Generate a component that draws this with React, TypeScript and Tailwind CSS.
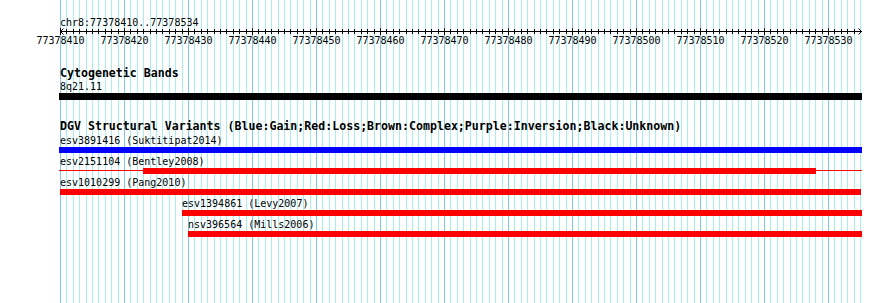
const ORIGIN = 60;
const BP_WIDTH = 6.4;
const START = 77378410;
const END = 77378534;

interface Feature {
  id: string;
  label: string;
  labelX: number;
  color: string;
  x1: number;
  x2: number;
  thin?: { x1: number; x2: number };
}

const variants: Feature[] = [
  { id: "esv3891416", label: "esv3891416 (Suktitipat2014)", labelX: 60, color: "#0000ff", x1: 59, x2: 862 },
  {
    id: "esv2151104",
    label: "esv2151104 (Bentley2008)",
    labelX: 60,
    color: "#ff0000",
    x1: 143,
    x2: 816,
    thin: { x1: 59, x2: 862 },
  },
  { id: "esv1010299", label: "esv1010299 (Pang2010)", labelX: 60, color: "#ff0000", x1: 60, x2: 861 },
  { id: "esv1394861", label: "esv1394861 (Levy2007)", labelX: 182, color: "#ff0000", x1: 182, x2: 862 },
  { id: "nsv396564", label: "nsv396564 (Mills2006)", labelX: 188, color: "#ff0000", x1: 188, x2: 862 },
];

function bpToX(bp: number): number {
  return Math.round(ORIGIN + (bp - START) * BP_WIDTH);
}

function Grid() {
  const lines = [];
  for (let i = 0; i <= END - START + 1; i++) {
    lines.push(
      <rect
        key={i}
        x={Math.round(ORIGIN + i * BP_WIDTH)}
        y={0}
        width={1}
        height={303}
        fill={i % 10 === 0 ? "#7fc7ec" : "#a9eded"}
      />
    );
  }
  return (
    <svg className="absolute inset-0" width={890} height={303}>
      {lines}
    </svg>
  );
}

function Ruler() {
  const ticks = [];
  const labels = [];
  for (let bp = START; bp <= END; bp++) {
    const x = bpToX(bp) + 0.5;
    const major = (bp - START) % 10 === 0;
    ticks.push(<line key={bp} x1={x} x2={x} y1={major ? 0 : 1} y2={major ? 7 : 6} stroke="#000" />);
    if (major) {
      labels.push(
        <text key={bp} x={x} y={16} textAnchor="middle" fontSize={10} fill="#000">
          {bp}
        </text>
      );
    }
  }
  return (
    <svg width={890} height={20} className="block">
      <line x1={60} x2={862} y1={3.5} y2={3.5} stroke="#000" />
      <polyline points="63.5,0.5 60.5,3.5 63.5,6.5" fill="none" stroke="#000" />
      <polyline points="858.5,0.5 861.5,3.5 858.5,6.5" fill="none" stroke="#000" />
      {ticks}
      {labels}
    </svg>
  );
}

function TrackTitle({ children, className }: { children: React.ReactNode; className?: string }) {
  return (
    <div className={`pl-[60px] h-[13px] leading-[13px] text-[11.6px] font-bold whitespace-nowrap ${className ?? ""}`}>
      {children}
    </div>
  );
}

function VariantRow({ feature }: { feature: Feature }) {
  return (
    <div className="mt-[2px]">
      <div className="h-[13px] leading-[13px] whitespace-nowrap" style={{ paddingLeft: feature.labelX }}>
        {feature.label}
      </div>
      <div className="relative h-[6px]">
        {feature.thin && (
          <div
            className="absolute top-[2px] h-px"
            style={{ left: feature.thin.x1, width: feature.thin.x2 - feature.thin.x1, backgroundColor: feature.color }}
          />
        )}
        <div
          className="relative h-[6px]"
          style={{ marginLeft: feature.x1, width: feature.x2 - feature.x1, backgroundColor: feature.color }}
        />
      </div>
    </div>
  );
}

export default function App() {
  return (
    <div className="relative w-[890px] h-[303px] overflow-hidden bg-white text-black text-[10px] font-['DejaVu_Sans_Mono',monospace]">
      <Grid />
      <div className="relative">
        <div className="mt-[16px] pl-[60px] h-[12px] leading-[13px] whitespace-nowrap">
          chr8:77378410..77378534
        </div>
        <Ruler />

        <TrackTitle className="mt-[19px]">Cytogenetic Bands</TrackTitle>
        <div className="pl-[60px] h-[13px] leading-[13px]">8q21.11</div>
        <div className="ml-[59px] w-[803px] h-[7px] bg-black" />

        <TrackTitle className="mt-[20px]">
          DGV Structural Variants (Blue:Gain;Red:Loss;Brown:Complex;Purple:Inversion;Black:Unknown)
        </TrackTitle>
        <div className="-mt-[1px]">
          {variants.map((v) => (
            <VariantRow key={v.id} feature={v} />
          ))}
        </div>
      </div>
    </div>
  );
}
